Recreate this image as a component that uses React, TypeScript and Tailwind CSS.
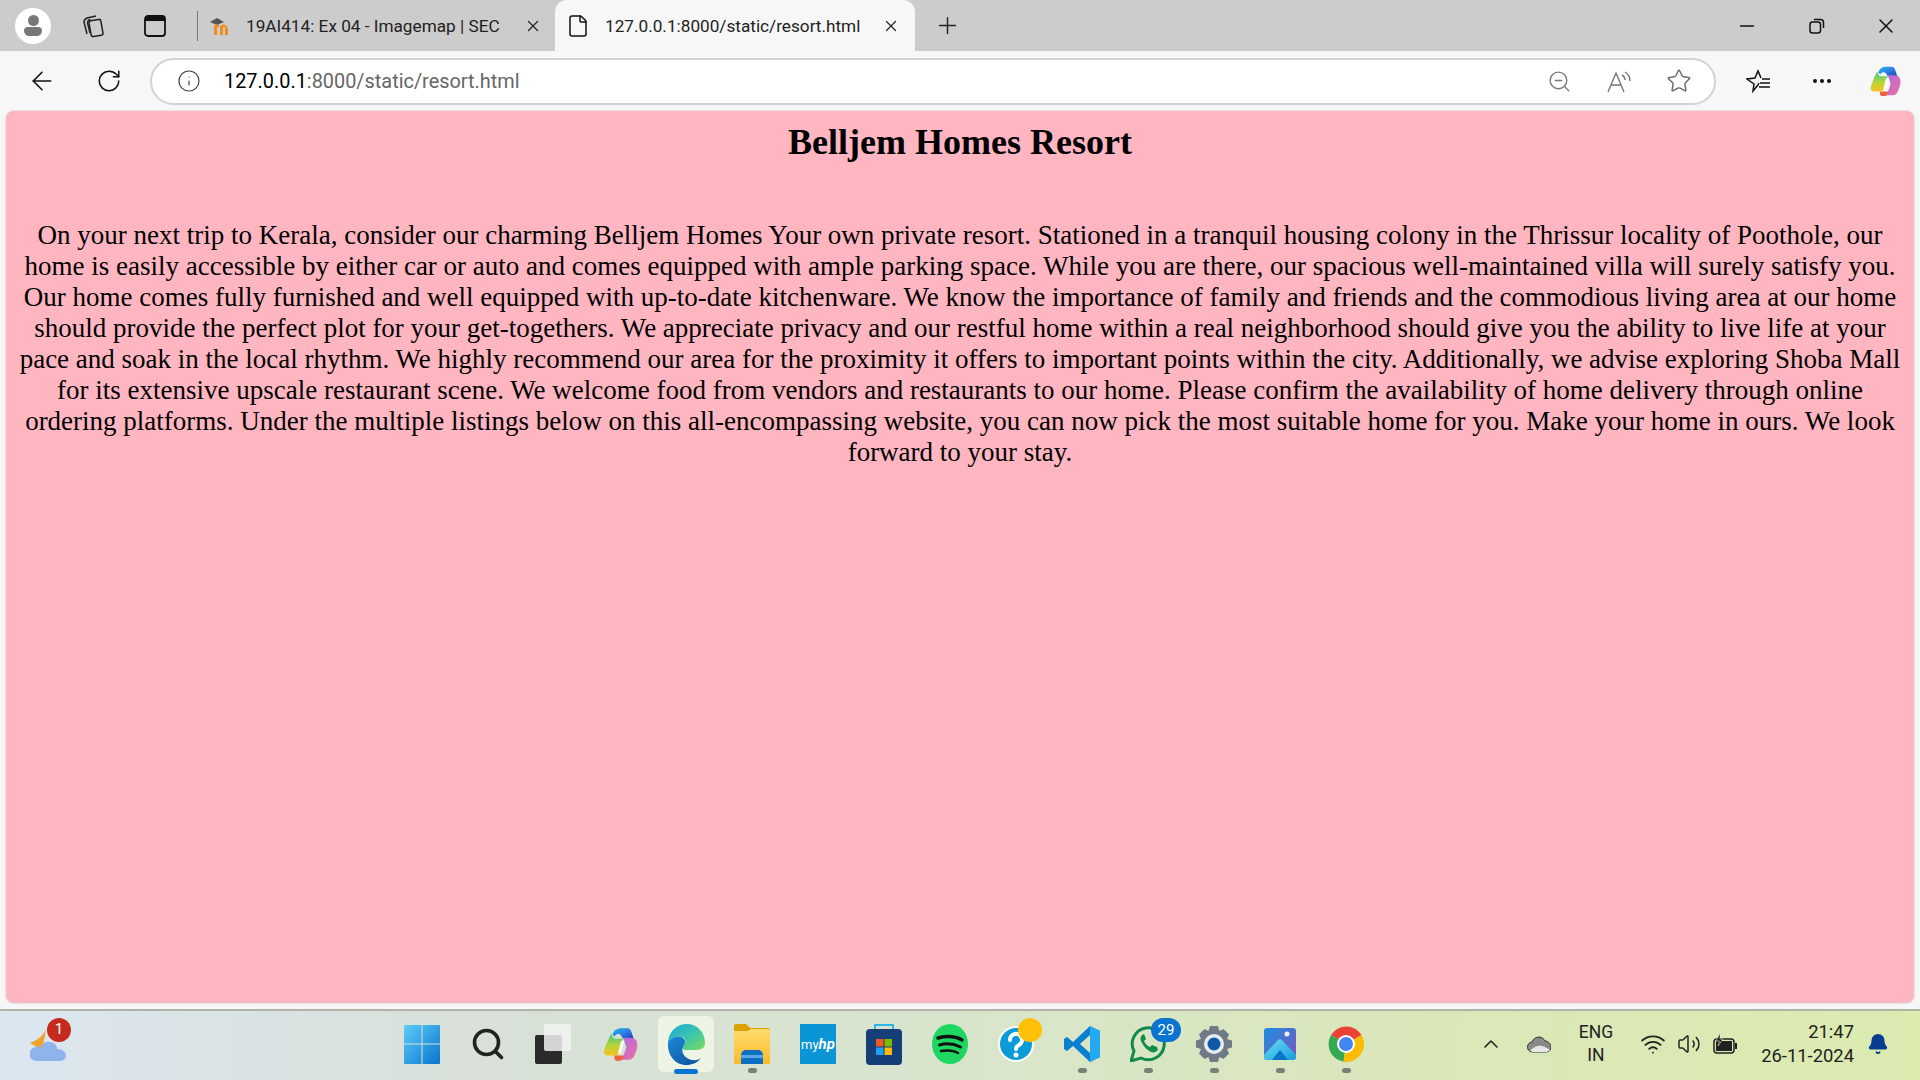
import React from 'react';
import { ArrowLeft, ChevronUp, Info, Minus, MoreHorizontal, Plus, RotateCw, Search, Star, Volume2, Wifi, X, ZoomOut, Bell, File } from 'lucide-react';

const Slot: React.FC<{ className: string; children?: React.ReactNode }> = ({ className, children }) => (
  <div className={`relative flex h-full shrink-0 items-center justify-center ${className}`}>{children}</div>
);

const CopilotIcon = ({ size }: { size: number }) => (
  <svg width={size} height={size} viewBox="0 0 36 36">
    <defs>
      <linearGradient id={`cpA${size}`} x1="0" y1="0" x2="1" y2="1">
        <stop offset="0" stopColor="#16b8e8" />
        <stop offset="0.5" stopColor="#2f7fe8" />
        <stop offset="1" stopColor="#1c3fb0" />
      </linearGradient>
      <linearGradient id={`cpB${size}`} x1="0" y1="0" x2="0" y2="1">
        <stop offset="0" stopColor="#3fc48a" />
        <stop offset="0.55" stopColor="#b8d43a" />
        <stop offset="1" stopColor="#f7c21a" />
      </linearGradient>
      <linearGradient id={`cpC${size}`} x1="0" y1="0" x2="1" y2="1">
        <stop offset="0" stopColor="#b06ae8" />
        <stop offset="1" stopColor="#f0709a" />
      </linearGradient>
    </defs>
    <path d="M11 9c1-4 4-6 8-6h6c2 0 3 1 4 4l2 6H21l-2-3c-1-2-5-2-6 1z" fill={`url(#cpA${size})`} />
    <path d="M10 8C8 11 5 18 3 24c-1 3 1 5 4 5h6c2 0 3-1 4-3l4-13h-6c-2 0-4 0-5-5z" fill={`url(#cpB${size})`} />
    <path d="M21 12h7c3 0 5 1 6 4 1 4 0 8-2 12-1 3-3 5-6 5h-6l4-12z" fill={`url(#cpC${size})`} />
    <path d="M13 29h9l-2 4c-1 1-2 1-4 1-3 0-4-2-3-5z" fill="#f0603c" />
    <path d="M19 15h3l-3 12h-3z" fill="#ffffff" opacity="0.85" />
  </svg>
);

const WindowsIcon = () => (
  <svg width="36" height="40" viewBox="0 0 36 40">
    <defs>
      <linearGradient id="winA" x1="0" y1="0" x2="1" y2="1">
        <stop offset="0" stopColor="#5ccdf8" />
        <stop offset="1" stopColor="#0a74d0" />
      </linearGradient>
    </defs>
    <path d="M1 1h16.500v18.500H0V2a1 1 0 0 1 1-1zM18.500 1H35a1 1 0 0 1 1 1v17.500H18.500zM0 20.500h17.500V40H1a1 1 0 0 1-1-1zM18.500 20.500H36V39a1 1 0 0 1-1 1H18.500z" fill="url(#winA)" />
  </svg>
);

const TaskViewIcon = () => (
  <svg width="38" height="40" viewBox="0 0 38 40">
    <rect x="0" y="11" width="27" height="29" rx="2" fill="#2a2a2a" />
    <rect x="9" y="0" width="27" height="27" rx="2" fill="#f2f2f2" fillOpacity="0.85" />
  </svg>
);

const EdgeIcon = () => (
  <svg width="38" height="42" viewBox="0 0 38 42">
    <defs>
      <linearGradient id="edgeA" x1="0" y1="0" x2="1" y2="1">
        <stop offset="0" stopColor="#1fa6df" />
        <stop offset="0.55" stopColor="#3cc8a8" />
        <stop offset="1" stopColor="#7fdc5a" />
      </linearGradient>
      <linearGradient id="edgeB" x1="0" y1="0" x2="1" y2="1">
        <stop offset="0" stopColor="#1b8ad6" />
        <stop offset="1" stopColor="#0d4f9e" />
      </linearGradient>
    </defs>
    <path d="M1 19C2 8 10 1 20 1c10 0 18 8 18 19 0 5-4 7-9 7H18c-3 0-3-3-1-5 2-3 2-7-2-8-6-1-12 1-14 5z" fill="url(#edgeA)" />
    <path d="M1 19c2-4 8-6 13-5 4 1 5 5 3 8-3 4-2 10 3 13 5 3 10 3 14 0-4 5-9 7-15 7C9 42 0 33 1 19z" fill="url(#edgeB)" />
  </svg>
);

const FolderIcon = () => (
  <svg width="36" height="40" viewBox="0 0 36 40">
    <defs>
      <linearGradient id="folderA" x1="0" y1="0" x2="0" y2="1">
        <stop offset="0" stopColor="#ffdc6e" />
        <stop offset="1" stopColor="#f9b92a" />
      </linearGradient>
    </defs>
    <path d="M0 2a2 2 0 0 1 2-2h10l4 4h18a2 2 0 0 1 2 2v4H0z" fill="#dca000" />
    <path d="M0 7h14l3-2h17a2 2 0 0 1 2 2v33H0z" fill="url(#folderA)" />
    <path d="M7 40v-9a5 5 0 0 1 5-5h12a5 5 0 0 1 5 5v9z" fill="#0b6fc4" />
    <rect x="7" y="31" width="22" height="3" fill="#5aa6e6" />
  </svg>
);

const StoreIcon = () => (
  <svg width="36" height="42" viewBox="0 0 36 42">
    <path d="M9 6V2h18v4" fill="none" stroke="#2cb5ea" strokeWidth="2" />
    <rect x="0" y="6" width="36" height="36" rx="4" fill="#163f78" />
    <rect x="10" y="16" width="7.500" height="7.500" fill="#ee5a24" />
    <rect x="18.500" y="16" width="7.500" height="7.500" fill="#7fb900" />
    <rect x="10" y="24.500" width="7.500" height="7.500" fill="#1ba1f2" />
    <rect x="18.500" y="24.500" width="7.500" height="7.500" fill="#ffb900" />
  </svg>
);

const SpotifyIcon = () => (
  <svg width="36" height="40" viewBox="0 0 36 40">
    <ellipse cx="18" cy="20" rx="18" ry="20" fill="#1ed760" />
    <g fill="none" stroke="#111111" strokeLinecap="round">
      <path d="M6 14c8-2 17-2 24 2" strokeWidth="3.500" />
      <path d="M7.500 21c7-2 15-1 21 2" strokeWidth="3" />
      <path d="M9 27c6-1 12-1 17 2" strokeWidth="2.500" />
    </g>
  </svg>
);

const HelpIcon = () => (
  <svg width="36" height="36" viewBox="0 0 36 36">
    <circle cx="18" cy="18" r="17" fill="#0b9bd8" stroke="#ffffff" strokeWidth="2" />
    <path d="M12 14a6 6 0 1 1 9 5c-2 1-3 2-3 4" fill="none" stroke="#ffffff" strokeWidth="4" strokeLinecap="round" />
    <circle cx="18" cy="29" r="2.500" fill="#ffffff" />
  </svg>
);

const VsCodeIcon = () => (
  <svg width="36" height="36" viewBox="0 0 36 36">
    <path d="M26 0l10 5v26l-10 5L9 20l-6 5-3-2v-10l3-2 6 5z" fill="#0a7fd0" />
    <path d="M26 9L16 18l10 9z" fill="#dbe5c4" />
    <path d="M26 0l10 5v26l-10 5z" fill="#23a8f2" />
  </svg>
);

const WhatsAppIcon = () => (
  <svg width="36" height="36" viewBox="0 0 36 36">
    <path d="M1 35l3-10a16 16 0 1 1 7 7z" fill="none" stroke="#128a4c" strokeWidth="3" />
    <path d="M12 9c-2 2-2 5 0 8 2 4 5 7 9 9 3 1 5 0 7-2l-1-3-5-2-2 2c-3-1-5-4-6-6l2-2-2-5z" fill="#128a4c" />
  </svg>
);

const SettingsIcon = () => (
  <svg width="36" height="36" viewBox="0 0 36 36">
    <path d="M14 0h8l1.500 5 4-2 5.500 5.500-2 4.500 5 1.500v7l-5 1.500 2 4.500-5.500 5.500-4-2L22 36h-8l-1.500-5-4 2L3 27.500l2-4.500-5-1.500v-7L5 13 3 8.500 8.500 3l4 2z" fill="#6f7a86" />
    <circle cx="18" cy="18" r="10" fill="#e8ecef" />
    <circle cx="18" cy="18" r="6.500" fill="#0f5aa8" />
  </svg>
);

const PhotosIcon = () => (
  <svg width="32" height="32" viewBox="0 0 32 32">
    <defs>
      <linearGradient id="phA" x1="0" y1="0" x2="1" y2="1">
        <stop offset="0" stopColor="#1c8fe0" />
        <stop offset="1" stopColor="#7c56bd" />
      </linearGradient>
      <linearGradient id="phB" x1="0" y1="0" x2="1" y2="1">
        <stop offset="0" stopColor="#6fdcf2" />
        <stop offset="1" stopColor="#129ee0" />
      </linearGradient>
    </defs>
    <rect width="32" height="32" rx="3" fill="url(#phA)" />
    <circle cx="23" cy="6" r="2.500" fill="#f0f0f5" />
    <path d="M0 27L14 12c1-1 3-1 4 0l14 15v2a3 3 0 0 1-3 3H3a3 3 0 0 1-3-3z" fill="url(#phB)" />
    <path d="M8 32l8-10 8 10z" fill="#0c74c8" />
  </svg>
);

const ChromeIcon = () => (
  <svg width="36" height="36" viewBox="0 0 36 36">
    <path d="M18 18L3 9A18 18 0 0 1 33.600 9z" fill="#ea4335" />
    <path d="M18 18L3 9a18 18 0 0 0 12.500 26.800z" fill="#34a853" />
    <path d="M18 18h0L15.500 35.800A18 18 0 0 0 33.600 9z" fill="#fbbc04" />
    <circle cx="18" cy="18" r="9" fill="#ffffff" />
    <circle cx="18" cy="18" r="7" fill="#4285f4" />
  </svg>
);

const Dot = () => <span className="absolute bottom-[7px] h-[5px] w-[9px] rounded-full bg-[#7a7f78]" />;

export default function App() {
  return (
    <div className="flex h-[1080px] w-[1920px] flex-col overflow-hidden bg-[#f7f7f7] font-['Roboto',sans-serif] text-black">
      {/* tab strip */}
      <div className="flex h-[51px] shrink-0 items-center bg-[#cccccc]">
        <Slot className="w-[56px] pl-[10px]">
          <div className="flex h-[36px] w-[36px] flex-col items-center justify-center rounded-full bg-white">
            <span className="h-[11px] w-[11px] rounded-full bg-[#777777]" />
            <span className="mt-[1px] h-[9px] w-[18px] rounded-t-[6px] rounded-b-[8px] bg-[#777777]" />
          </div>
        </Slot>
        <Slot className="w-[74px]">
          <svg width="24" height="24" viewBox="0 0 24 24" fill="none" stroke="#222" strokeWidth="1.500">
            <rect x="9" y="6" width="12" height="16" rx="2" transform="rotate(-10 15 14)" />
            <path d="M6 20L3 8c0-2 1-3 3-4l9-2" />
            <path d="M9 19L6.500 9c0-2 1-3 3-3.500" />
          </svg>
        </Slot>
        <Slot className="w-[50px]">
          <svg width="22" height="22" viewBox="0 0 22 22" fill="none">
            <rect x="1" y="1" width="20" height="20" rx="3" stroke="#111" strokeWidth="1.800" />
            <path d="M1 3a2 2 0 0 1 2-2h16a2 2 0 0 1 2 2v3H1z" fill="#111" />
          </svg>
        </Slot>
        <div className="ml-[17px] h-[30px] w-[1px] shrink-0 bg-[#777777]" />
        <div className="flex h-full w-[357px] shrink-0 items-center">
          <svg className="ml-[11px]" width="22" height="18" viewBox="0 0 22 18">
            <path d="M1 5l7-4 7 4-7 3z" fill="#555" />
            <path d="M5 18V9c3-3 5-1 6 1 1-2 4-4 6-1 2 1 2 3 2 9h-3v-8h-2v8h-3v-8H8v8z" fill="#f28a1e" />
          </svg>
          <span className="ml-[15px] w-[268px] whitespace-nowrap pt-[2px] text-[17.200px] leading-none text-[#222222]">19AI414: Ex 04 - Imagemap | SEC</span>
          <X className="ml-[10px]" size={18} strokeWidth={1.600} color="#222" />
        </div>
        <div className="flex h-full w-[360px] shrink-0 items-center rounded-t-[12px] bg-[#f7f7f7]">
          <File className="ml-[11px]" size={24} strokeWidth={1.500} color="#111" />
          <span className="ml-[15px] w-[277px] whitespace-nowrap pt-[2px] text-[17.200px] leading-none text-[#222222]">127.0.0.1:8000/static/resort.html</span>
          <X size={18} strokeWidth={1.600} color="#222" />
        </div>
        <Slot className="w-[64px]">
          <Plus size={27} strokeWidth={1.300} color="#222" />
        </Slot>
        <div className="flex-1" />
        <Slot className="w-[70px]">
          <Minus size={22} strokeWidth={1.700} color="#111" />
        </Slot>
        <Slot className="w-[70px]">
          <svg width="16" height="16" viewBox="0 0 16 16" fill="none" stroke="#111" strokeWidth="1.500">
            <rect x="1" y="4" width="10.500" height="11" rx="2.500" />
            <path d="M5 1.500h6.500a3 3 0 0 1 3 3V10" />
          </svg>
        </Slot>
        <Slot className="w-[68px]">
          <X size={24} strokeWidth={1.500} color="#111" />
        </Slot>
      </div>

      {/* toolbar */}
      <div className="flex h-[60px] shrink-0 items-center bg-[#f7f7f7]">
        <Slot className="w-[84px]">
          <ArrowLeft size={30} strokeWidth={1.300} color="#111" />
        </Slot>
        <Slot className="w-[50px]">
          <RotateCw size={26} strokeWidth={1.400} color="#111" />
        </Slot>
        <div className="ml-[16px] flex h-[47px] w-[1566px] shrink-0 items-center rounded-full border-2 border-[#d2d2d2] bg-white">
          <Info className="ml-[25px]" size={24} strokeWidth={1.200} color="#444" />
          <div className="ml-[23px] flex-1 whitespace-nowrap pt-[2px] text-[19.900px] leading-none text-[#666666]">
            <span className="text-black">127.0.0.1</span>:8000/static/resort.html
          </div>
          <ZoomOut className="mr-[35px]" size={25} strokeWidth={1.300} color="#777" />
          <svg className="mr-[33px]" width="26" height="24" viewBox="0 0 26 24" fill="none" stroke="#777" strokeWidth="1.400">
            <path d="M1 23L9 4l8 19M4 16h10" />
            <path d="M15 6c2 1 3 3 3 5M18 3c3 2 5 5 5 9" />
          </svg>
          <Star className="mr-[22px]" size={26} strokeWidth={1.300} color="#666" />
        </div>
        <Slot className="w-[76px]">
          <svg className="ml-[10px]" width="26" height="24" viewBox="0 0 26 24" fill="none" stroke="#111" strokeWidth="1.500">
            <path d="M13 14l-1 2-5 6 1-7-7-5 8-1 3-7 3 7" />
            <path d="M16 10h8M14 14h10M13 18h11" />
          </svg>
        </Slot>
        <Slot className="w-[60px]">
          <MoreHorizontal size={24} strokeWidth={2} color="#111" />
        </Slot>
        <Slot className="w-[66px]">
          <CopilotIcon size={34} />
        </Slot>
      </div>

      {/* page */}
      <div className="min-h-0 flex-1 px-[6px] pb-[6px]">
        <div className="h-full rounded-[8px] bg-[#ffb6c1] px-[10px] text-center font-['Liberation_Serif',serif] shadow-[0_0_2px_rgba(0,0,0,0.25)]">
          <h1 className="pt-[11px] text-[36px] font-bold leading-[40px]">Belljem Homes Resort</h1>
          <p className="mt-[58px] text-[27px] leading-[31px]">
            On your next trip to Kerala, consider our charming Belljem Homes Your own private resort. Stationed in a tranquil housing colony in the Thrissur locality of Poothole, our home is easily accessible by either car or auto and comes equipped with ample parking space. While you are there, our spacious well-maintained villa will surely satisfy you. Our home comes fully furnished and well equipped with up-to-date kitchenware. We know the importance of family and friends and the commodious living area at our home should provide the perfect plot for your get-togethers. We appreciate privacy and our restful home within a real neighborhood should give you the ability to live life at your pace and soak in the local rhythm. We highly recommend our area for the proximity it offers to important points within the city. Additionally, we advise exploring Shoba Mall for its extensive upscale restaurant scene. We welcome food from vendors and restaurants to our home. Please confirm the availability of home delivery through online ordering platforms. Under the multiple listings below on this all-encompassing website, you can now pick the most suitable home for you. Make your home in ours. We look forward to your stay.
          </p>
        </div>
      </div>

      {/* taskbar */}
      <div className="flex h-[71px] shrink-0 items-center border-t-2 border-[#aeb4a8] bg-[linear-gradient(90deg,#dce6f0_0%,#d8e0d8_25%,#d8e5cc_50%,#dae7b8_75%,#dcebb0_100%)]">
        <Slot className="w-[389px] justify-start">
          <div className="relative ml-[30px] mt-[4px]">
            <svg width="37" height="36" viewBox="0 0 37 36">
              <path d="M16 0C12 6 8 10 0 13l12 7z" fill="#eea42a" />
              <path d="M7 31a7 7 0 0 1-1-14c2-1 4 0 5 1 1-5 5-7 9-6 4 0 7 3 7 7 5 0 9 3 9 6 0 4-3 6-7 6z" fill="#8fb3ec" />
            </svg>
            <span className="absolute -top-[12px] left-[17px] flex h-[24px] w-[24px] items-center justify-center rounded-full bg-[#c42b1c] text-[15px] leading-none text-white">1</span>
          </div>
        </Slot>
        <Slot className="w-[66px] pb-[3px]"><WindowsIcon /></Slot>
        <Slot className="w-[66px] pb-[3px]"><Search size={36} strokeWidth={2.400} color="#222" /></Slot>
        <Slot className="w-[66px] pb-[3px]"><TaskViewIcon /></Slot>
        <Slot className="w-[66px] pb-[3px]"><CopilotIcon size={38} /></Slot>
        <Slot className="w-[66px] pb-[3px]">
          <div className="flex h-[56px] w-[56px] items-center justify-center rounded-[6px] bg-[#eef4e4]"><EdgeIcon /></div>
          <span className="absolute bottom-[6px] h-[5px] w-[24px] rounded-full bg-[#0a74d0]" />
        </Slot>
        <Slot className="w-[66px] pb-[3px]"><FolderIcon /><Dot /></Slot>
        <Slot className="w-[66px] pb-[3px]">
          <div className="flex h-[40px] w-[36px] items-center justify-center bg-[#0a96d6] text-[13px] leading-none text-white">
            my<span className="text-[15px] font-bold italic">hp</span>
          </div>
        </Slot>
        <Slot className="w-[66px] pb-[3px]"><StoreIcon /></Slot>
        <Slot className="w-[66px] pb-[3px]"><SpotifyIcon /></Slot>
        <Slot className="w-[66px] pb-[3px]">
          <HelpIcon />
          <span className="absolute left-[35px] top-[7px] h-[24px] w-[24px] rounded-full bg-[#ffc107]" />
        </Slot>
        <Slot className="w-[66px] pb-[3px]"><VsCodeIcon /><Dot /></Slot>
        <Slot className="w-[66px] pb-[3px]">
          <WhatsAppIcon />
          <span className="absolute left-[36px] top-[7px] flex h-[24px] w-[30px] items-center justify-center rounded-full bg-[#0a74d0] text-[15px] leading-none text-white">29</span>
          <Dot />
        </Slot>
        <Slot className="w-[66px] pb-[3px]"><SettingsIcon /><Dot /></Slot>
        <Slot className="w-[66px] pb-[3px]"><PhotosIcon /><Dot /></Slot>
        <Slot className="w-[66px] pb-[3px]"><ChromeIcon /><Dot /></Slot>
        <div className="flex-1" />
        <Slot className="w-[48px] pb-[3px]"><ChevronUp size={24} strokeWidth={1.600} color="#222" /></Slot>
        <Slot className="w-[48px] pb-[3px]">
          <svg width="24" height="17" viewBox="0 0 24 17">
            <path d="M6 16a5 5 0 0 1-1-10c1-3 4-5 7-5 3 0 5 2 6 4 3 0 6 3 6 6 0 3-2 5-5 5z" fill="#8a8a8a" stroke="#333" strokeWidth="1" />
            <path d="M3 15c3-4 8-6 12-5 3 1 6 2 8 4l-3 2H6z" fill="#e8e8e8" />
          </svg>
        </Slot>
        <Slot className="w-[66px] pb-[3px]">
          <div className="text-center text-[17.500px] leading-[23px] text-[#222222]">ENG<br />IN</div>
        </Slot>
        <Slot className="w-[48px] pb-[3px]"><Wifi size={26} strokeWidth={1.700} color="#222" /></Slot>
        <Slot className="w-[24px] pb-[3px]"><Volume2 size={26} strokeWidth={1.500} color="#222" /></Slot>
        <Slot className="w-[48px] pb-[3px]">
          <svg width="24" height="22" viewBox="0 0 24 22">
            <rect x="1" y="6" width="20" height="14" rx="3" fill="none" stroke="#222" strokeWidth="1.500" />
            <rect x="3" y="8" width="16" height="10" fill="#222" />
            <rect x="22" y="10" width="2" height="6" fill="#222" />
            <path d="M7 0L3 8h3.500L5 13l5-7H7z" fill="#222" stroke="#dce8c0" strokeWidth="0.600" />
          </svg>
        </Slot>
        <div className="w-[105px] shrink-0 pb-[3px] text-right text-[18.400px] leading-[24px] text-[#222222]">
          <div>21:47</div>
          <div>26-11-2024</div>
        </div>
        <Slot className="ml-[4px] mr-[22px] w-[40px] pb-[3px]">
          <Bell size={22} fill="#0a3d91" color="#0a3d91" />
        </Slot>
      </div>
    </div>
  );
}
